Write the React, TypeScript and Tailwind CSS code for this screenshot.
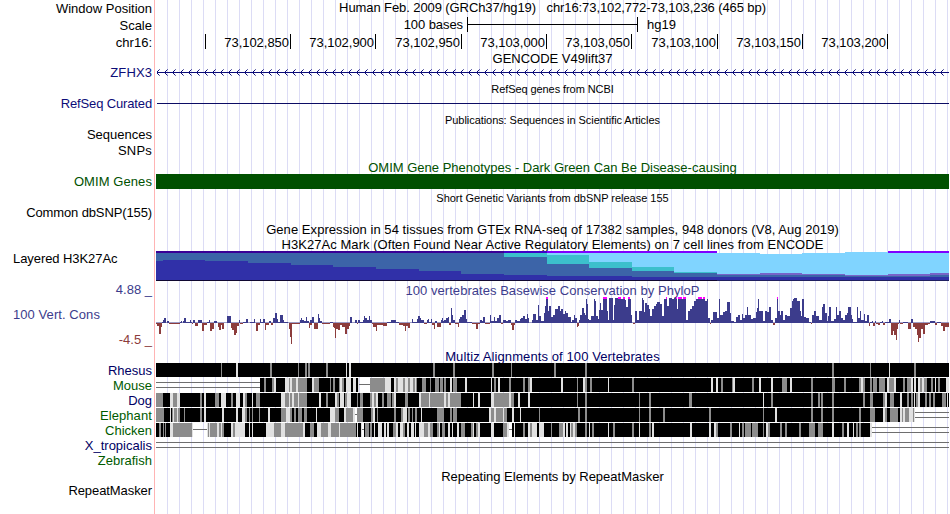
import React from 'react';

// The tracks start at x = 156 and are 793px wide (465 bases)
const TRACK_LEFT = 156;
const TRACK_WIDTH = 793;

interface Segment {
  origin: number;
  data: string;
}

interface Step {
  x: number;
  width: number;
  value: string;
}

// Each segment holds "start:value" steps in thirds of a pixel from its origin
const parseSteps = (segments: Segment[]): Step[] => {
  const points = segments.flatMap(({ origin, data }) =>
    data.split(' ').map((item) => {
      const [start, value] = item.split(':');
      return { x: Math.round(origin + Number(start) / 3), value };
    })
  );
  return points.map((p, i) => {
    const next = i + 1 < points.length ? points[i + 1].x : TRACK_LEFT + TRACK_WIDTH;
    return { x: p.x, width: Math.max(0, next - p.x), value: p.value };
  });
};

// Values of 26 are clipped at the top of the graph
const conservation: Segment[] = [
  {
    origin: 0,
    data: '468:-1 472:-3 476:-11 483:-4 487:1 490:3 493:5 498:0 502:2 508:-1 540:1 543:2 547:0 550:2 553:5 558:1 570:3 573:1 577:-1 580:3 584:0 585:-3 593:3 606:-8 613:-2 620:1 627:3 630:-8 636:-6 642:2 650:0 654:-4 658:-7 663:-2 667:-6 672:0 681:7 693:-5 697:-7 702:-12 709:-10 712:-3 717:3 721:-1 729:1 738:4 743:0 750:1 762:4 766:0 768:-8 773:-2 780:4 783:1 790:4 795:-7 798:-2 806:2 812:-2 819:5 824:10 831:4 835:1 840:8 849:3 853:1 863:0 867:-6 870:-14 873:-21 876:-1 900:3 904:5 907:3 912:2 917:6 921:2 926:-5 931:3 943:-6 953:9 956:3',
  },
  {
    origin: 310,
    data: '0:-2 6:6 12:-6 17:-2 24:9 27:5 31:2 36:-1 60:1 68:-4 73:-5 76:-15 79:-6 84:-7 89:-2 97:-4 105:-11 111:-6 116:-3 120:6 126:0 135:3 140:-1 145:3 149:1 160:3 163:7 166:5 171:3 178:7 181:3 186:-1 190:-4 197:-8 201:-2 220:-3 230:1 243:3 258:1 267:-2 280:-3 285:-8 288:-3 293:-5 301:0 305:4 310:1 322:4 325:7 329:5 333:3 342:-1 350:3 353:4 357:1 362:4 367:-2 372:-6 376:2 381:-4 392:3 396:5 399:2 403:3 407:5 413:6 418:-2 423:15 426:8 430:3 436:-1 443:-4 447:4 451:6 455:8 461:13 468:4 471:1 485:-1 498:-6 504:-1 510:3 515:2 518:6 526:-1 540:8 544:2 552:6 555:2 560:5 566:8 572:-1 580:3 588:2 594:3 602:-2 606:-7 612:-2 616:3 622:2 630:4 634:5 640:7 645:4 650:9 655:5 658:0 665:3 670:9 677:3 684:18 687:7 692:2 702:10 706:17 708:26 714:12 717:17 723:6 728:8 735:14 743:17 749:12 753:14 758:9 765:12 768:10 775:6 783:1 787:3 792:8 795:5 801:-4 805:-3 808:3 811:8 815:15 821:10 824:8 827:24 830:19 833:4 837:3 843:7 852:24 855:22 858:7 864:4 867:13 870:20 873:13 879:26 891:12 894:3 897:25 909:3 913:18 915:25 925:26 932:24 938:26 945:23 949:16 953:26',
  },
  {
    origin: 630,
    data: '0:24 3:8 6:0 9:-1 14:12 22:3 28:12 36:25 40:23 43:11 46:20 52:18 56:14 61:7 67:14 73:17 79:19 82:21 90:19 96:7 102:24 107:26 111:17 116:25 125:24 132:25 137:26 141:14 145:26 155:24 158:26 167:3 175:12 181:14 187:17 193:22 199:24 204:26 217:24 219:26 226:22 231:24 234:5 240:-1 243:3 250:11 260:5 267:24 270:8 278:11 285:12 291:21 300:10 303:2 312:1 318:6 325:8 330:3 335:9 340:5 346:8 352:16 355:8 362:4 368:5 378:11 381:15 384:24 387:12 399:2 405:12 411:11 416:16 422:3 429:-2 436:5 441:26 444:12 449:8 453:12 459:3 464:8 470:7 480:15 485:22 489:24 493:25 502:22 509:12 512:7 516:24 522:6 528:5 538:1 543:-1 547:8 552:12 558:7 567:3 576:16 579:19 585:10 590:2 594:7 598:16 602:2 612:4 618:16 622:8 628:12 634:5 638:3 645:8 650:10 654:16 662:8 667:4 670:1 680:16 684:5 690:12 694:3 702:9 705:2 711:8 716:-3 720:1 725:2 730:-3 735:2 738:-1 745:-2 750:1 757:2 760:-2 765:1 777:4 782:-5 784:-12 788:-8 792:-12 797:-17 801:-6 804:-1 807:3 811:-1 820:1 834:-6 843:4 849:-4 855:-6 860:-12 864:-19 868:-15 872:-6 879:-11 886:-2 895:-1 900:2 915:-2 921:1 932:-3 939:-8 945:-4',
  },
];

// K = identical, G / L = weaker match, S = gap, D = unalignable stretch
const alignments: { name: string; segments: Segment[] }[] = [
  {
    name: 'Rhesus',
    segments: [
      { origin: 100, data: '168:K 363:G 366:K 408:L 414:K 510:G 516:K 594:G 597:K 615:G 621:K 624:G' },
      { origin: 310, data: '0:K 48:G 54:K 108:L 111:K 117:L 123:K 369:G 375:K 429:G 435:K 546:G 552:K 603:G 606:K' },
      { origin: 520, data: '0:K 102:G 108:K 195:G 201:K' },
      { origin: 730, data: '0:K 306:G 312:K 420:G 423:K 477:L 480:K 552:G 558:K' },
    ],
  },
  {
    name: 'Mouse',
    segments: [
      { origin: 100, data: '168:D 480:K 492:G 498:K 516:G 522:L 528:K 555:L 567:G 570:L 576:G 588:L 594:G 621:K' },
      { origin: 310, data: '0:K 6:L 12:G 27:K 60:G 63:K 69:G 75:K 87:G 90:L 96:G 102:K 108:L 123:K 129:L 138:K 144:L 147:S 180:G 225:L 243:K 252:L 258:G 264:L 279:G 285:L 294:G 300:L 309:G 315:L 318:G 321:K 336:G 348:K 360:G 363:K 375:G 387:K 390:G 399:K 402:G 408:K 420:L 426:K 429:G 441:K 465:L 471:K 543:L 546:K 552:G 558:K 564:L 570:K 597:G 603:K 639:G 645:K 654:G' },
      { origin: 520, data: '0:K 9:G 15:K 24:G 30:L 36:K 123:L 129:K 171:G 174:K 189:L 195:G 201:K 210:G 216:K 264:L 267:K 336:G 342:K 573:L 579:K 588:L 594:K 603:G 609:K 639:L 645:K' },
      { origin: 730, data: '0:K 6:G 9:L 15:K 66:G 72:K 87:L 93:K 123:L 129:K 156:G 171:K 180:L 186:K 243:G 249:K 306:G 315:K 342:G 348:K 387:G 393:L 399:G 405:K 420:G 426:K 429:G 441:K 447:G 465:K 471:L 477:G 492:L 498:K 519:G 525:K 531:G 543:L 549:K 552:L 558:K 564:L 570:G 576:L 582:G 591:K 603:G 609:K 615:L 618:K 624:G 630:K 648:L' },
    ],
  },
  {
    name: 'Dog',
    segments: [
      { origin: 100, data: '168:G 189:K 210:L 219:G 231:L 240:K 300:G 306:K 312:L 318:K 345:G 357:K 363:L 378:K 393:G 399:K 408:L 420:K 429:L 435:G 441:K 456:L 459:K 468:G 480:K 543:L 555:G 567:L 570:G 576:L 582:G 594:L 597:G 621:K' },
      { origin: 310, data: '0:K 27:L 33:K 48:G 54:K 75:L 81:G 87:K 90:L 102:K 105:G 111:L 123:K 141:G 144:K 150:G 159:K 180:G 186:L 192:G 198:L 204:K 216:G 222:K 231:G 243:K 246:G 252:L 258:K 285:G 294:K 327:L 333:G 357:L 360:G 402:L 408:G 414:L 420:G 453:K 489:L 492:K 504:L 510:K 543:L 552:G 597:L 603:G 612:K 624:L 630:K 654:L' },
      { origin: 520, data: '0:K 24:L 30:K 171:G 174:K 195:G 201:K 357:G 360:K 387:G 393:K 507:G 516:K' },
      { origin: 730, data: '0:K 99:L 102:K 123:G 129:K 243:G 249:K 264:G 270:K 273:G 279:K 306:G 312:K 399:G 405:K 420:G 429:K 459:G 465:L 471:K 480:G 492:K 510:L 516:K 531:G 537:K 543:G 549:K 552:L 555:K 558:G 564:L 570:K 585:G 591:K 597:G 603:K 609:G 615:K 636:G 648:K 651:L 654:K' },
    ],
  },
  {
    name: 'Elephant',
    segments: [
      { origin: 100, data: '168:G 192:K 210:L 213:K 216:G 219:L 222:G 231:L 234:G 240:K 252:G 255:K 300:G 306:K 312:L 318:K 366:L 372:K 408:L 414:K 426:L 435:G 441:K 447:G 450:K 456:G 459:K 477:G 480:K 504:L 510:K 543:G 558:L 570:G 576:K 582:G 588:K 594:G 606:K 612:G 621:K' },
      { origin: 310, data: '0:K 18:L 21:K 60:L 75:G 87:K 102:L 108:G 129:L 135:S 141:G 159:K 183:G 189:L 195:K 201:G 204:K 252:G 258:K 273:G 279:L 291:K 294:G 300:K 306:G 309:K 315:G 321:K 333:L 336:K 381:G 402:K 420:G 426:K 429:G 441:K 537:L 543:G 552:L 558:G 579:L 582:G 591:K 606:L 612:K 630:L 633:K' },
      { origin: 520, data: '0:L 3:K 57:G 60:K 174:G 180:K 195:G 201:K 357:G 360:K 387:G 393:K 429:G 435:K 567:G 573:K' },
      { origin: 730, data: '0:K 99:G 102:K 135:L 141:K 243:G 249:K 273:G 279:K 306:G 312:K 387:G 393:K 420:G 435:K 459:L 465:G 471:K 480:G 504:K 510:L 516:G 519:L 525:G 537:L 549:G 552:L 555:D' },
    ],
  },
  {
    name: 'Chicken',
    segments: [
      { origin: 100, data: '168:K 177:G 183:K 189:G 192:K 195:G 198:K 210:L 219:G 276:L 279:S 321:L 324:G 327:L 330:G 351:L 357:G 363:L 366:G 372:K 393:L 399:G 405:L 435:K 447:L 450:K 456:L 459:K 498:L 522:G 543:L 555:G 609:L 615:K 642:G 651:L' },
      { origin: 310, data: '0:G 12:K 21:L 33:G 54:L 63:G 87:L 90:G 138:K 141:L 144:K 153:L 156:S 162:K 165:G 177:K 180:G 186:K 192:L 195:K 204:L 216:K 222:L 228:K 231:L 237:K 249:G 258:L 264:K 270:L 279:G 285:K 291:L 297:K 303:L 312:K 315:L 318:K 327:L 342:G 354:L 360:G 369:K 381:G 387:L 390:K 396:G 405:K 414:L 420:K 426:L 429:K 441:L 447:K 453:G 465:K 483:G 489:L 492:K 498:G 504:L 510:K 543:L 552:K 579:G 591:L 597:S 606:K 612:L 615:K 639:G 645:K 654:L' },
      { origin: 520, data: '0:K 9:G 15:K 24:L 30:G 36:L 51:K 57:L 72:K 93:G 96:K 117:G 129:L 135:K 138:L 144:K 150:L 153:G 159:L 165:G 171:K 195:G 201:K 207:L 210:K 216:G 222:K 264:L 267:K 279:G 285:K 336:G 342:K 357:L 360:K 387:G 393:K 396:L 402:K 510:L 516:K 567:L 573:K 582:L 588:G 594:K 630:G 636:K 657:L' },
      { origin: 730, data: '0:G 6:K 27:L 30:K 36:G 42:K 45:G 63:K 66:G 84:K 99:G 102:K 108:L 114:G 120:K 150:G 156:K 165:G 171:K 207:G 213:K 237:G 255:K 264:G 279:K 306:L 312:K 336:G 342:K 351:L 357:K 369:L 372:K 378:G 384:K 387:G 393:K 420:L 426:D' },
    ],
  },
  { name: 'X_tropicalis', segments: [{ origin: 156, data: '0:D' }] },
];

const shades: Record<string, string> = {
  K: 'fill-black',
  G: 'fill-[#8c8c8c]',
  L: 'fill-[#e1e1e1]',
};

// [x, width, light top, teal top, purple top, blue top, dark top]
const histone = [
  [156, 7, 253, 253, 253, 253, 261],
  [163, 42, 253, 253, 253, 253, 260],
  [205, 43, 253, 253, 253, 253, 261],
  [248, 43, 253, 253, 253, 253, 263],
  [291, 42, 253, 253, 253, 253, 265],
  [333, 43, 253, 253, 253, 253, 267],
  [376, 43, 253, 253, 253, 253, 269],
  [419, 42, 253, 253, 253, 253, 271],
  [461, 43, 253, 253, 253, 253, 274],
  [504, 43, 253, 253, 257, 257, 275],
  [547, 42, 253, 255, 264, 264, 276],
  [589, 43, 253, 262, 268, 268, 276],
  [632, 42, 253, 267, 271, 271, 277],
  [674, 43, 253, 272, 273, 273, 277],
  [717, 43, 253, 274, 274, 275, 277],
  [760, 42, 254, 273, 273, 275, 277],
  [802, 43, 253, 274, 274, 275, 277],
  [845, 43, 252, 275, 275, 276, 277],
  [888, 42, 253, 274, 274, 276, 277],
  [930, 19, 253, 273, 273, 275, 277],
];

const ruler = [
  { label: '', width: 'w-[50px]' },
  { label: '73,102,850', width: 'w-[85px]' },
  { label: '73,102,900', width: 'w-[85px]' },
  { label: '73,102,950', width: 'w-[86px]' },
  { label: '73,103,000', width: 'w-[85px]' },
  { label: '73,103,050', width: 'w-[85px]' },
  { label: '73,103,100', width: 'w-[86px]' },
  { label: '73,103,150', width: 'w-[85px]' },
  { label: '73,103,200', width: 'w-[85px]' },
];

const labels = [
  { text: 'Window Position', style: 'h-[17px] text-black' },
  { text: 'Scale', style: 'h-[17px] text-black' },
  { text: 'chr16:', style: 'h-[17px] text-black' },
  { text: 'ZFHX3', style: 'mt-[14px] h-[15px] tracking-[0.1px] text-[#0c0c78]' },
  { text: 'RefSeq Curated', style: 'mt-[16px] h-[15px] tracking-[-0.14px] text-[#0c0c78]' },
  { text: 'Sequences', style: 'mt-[16px] h-[15px] text-black' },
  { text: 'SNPs', style: 'mt-px h-[15px] tracking-[0.2px] text-black' },
  { text: 'OMIM Genes', style: 'mt-[16px] h-[15px] tracking-[0.08px] text-[#005000]' },
  { text: 'Common dbSNP(155)', style: 'mt-[16px] h-[15px] tracking-[-0.12px] text-black' },
  { text: 'Layered H3K27Ac', style: 'mt-[31px] h-[15px] w-[139px] self-end tracking-[-0.07px] text-black' },
  { text: '4.88 _', style: 'mt-[16px] h-[15px] text-[#3c3c8c]' },
  { text: '100 Vert. Cons', style: 'mt-[10px] h-[15px] w-[139px] self-end tracking-[0.07px] text-[#3c3c8c]' },
  { text: '-4.5 _', style: 'mt-[10px] h-[15px] text-[#8c3c3c]' },
  { text: 'Rhesus', style: 'mt-[16px] h-[15px] text-[#000064]' },
  { text: 'Mouse', style: 'h-[15px] text-[#005a00]' },
  { text: 'Dog', style: 'h-[15px] text-[#000064]' },
  { text: 'Elephant', style: 'h-[15px] tracking-[0.1px] text-[#005a00]' },
  { text: 'Chicken', style: 'h-[15px] text-[#005a00]' },
  { text: 'X_tropicalis', style: 'h-[15px] text-[#000064]' },
  { text: 'Zebrafish', style: 'h-[15px] text-[#005a00]' },
  { text: 'RepeatMasker', style: 'mt-[15px] h-[15px] tracking-[-0.08px] text-black' },
];

const Caption: React.FC<{ className: string; children: React.ReactNode }> = ({ className, children }) => (
  <div className={`flex items-center justify-center whitespace-pre ${className}`}>{children}</div>
);

const GeneArrows: React.FC = () => {
  const tips = Array.from({ length: 99 }, (_, i) => i * 8);
  return (
    <svg width={793} height={15} shapeRendering="crispEdges" className="block fill-[#0c0c78]">
      <rect x={1} y={7} width={792} height={1} />
      {tips.map((x) => (
        <g key={x}>
          {[1, 2, 3].map((d) => (
            <g key={d} className={d === 3 ? 'opacity-60' : ''}>
              <rect x={x + d} y={7 - d} width={1} height={1} />
              <rect x={x + d} y={7 + d} width={1} height={1} />
            </g>
          ))}
        </g>
      ))}
    </svg>
  );
};

const HistoneGraph: React.FC = () => (
  <svg width={793} height={30} viewBox="156 251 793 30" shapeRendering="crispEdges" className="block">
    <rect x={156} y={251} width={348} height={2} className="fill-[#3a0096]" />
    <rect x={504} y={251} width={43} height={2} className="fill-[#4000c8]" />
    <rect x={547} y={251} width={170} height={2} className="fill-[#7f00ff]" />
    <rect x={888} y={251} width={61} height={2} className="fill-[#7f00ff]" />
    {histone.map(([x, w, light, teal, purple, blue, dark]) => (
      <g key={x}>
        <rect x={x} y={light} width={w} height={280 - light} className="fill-[#80d4ff]" />
        <rect x={x} y={teal} width={w} height={280 - teal} className={x < 717 ? 'fill-[#3cc0cc]' : 'fill-[#7864c8]'} />
        <rect x={x} y={purple} width={w} height={280 - purple} className="fill-[#7864c8]" />
        <rect x={x} y={blue} width={w} height={280 - blue} className="fill-[#3c64a8]" />
        <rect x={x} y={dark} width={w} height={280 - dark} className="fill-[#3030a8]" />
      </g>
    ))}
    <rect x={156} y={280} width={561} height={1} className="fill-[#100830]" />
    <rect x={717} y={280} width={232} height={1} className="fill-[#202060]" />
  </svg>
);

const ConservationGraph: React.FC = () => (
  <svg width={793} height={50} viewBox="156 297 793 50" shapeRendering="crispEdges" className="block">
    {parseSteps(conservation).map(({ x, width, value }) => {
      const score = Number(value);
      if (score < 0) {
        return <rect key={x} x={x} y={323} width={width} height={-score} className="fill-[#8c3c3c]" />;
      }
      return (
        <g key={x}>
          <rect x={x} y={323 - score} width={width} height={score} className="fill-[#3c3c8c]" />
          {score === 26 && <rect x={x} y={297} width={width} height={2} className="fill-[#ff00ff]" />}
        </g>
      );
    })}
    <rect x={156} y={322} width={793} height={1} className="fill-[#3c3c8c]/50" />
  </svg>
);

const AlignmentRow: React.FC<{ segments: Segment[] }> = ({ segments }) => (
  <svg width={793} height={15} viewBox="156 0 793 15" shapeRendering="crispEdges" className="block">
    {parseSteps(segments).map(({ x, width, value }) => {
      if (value === 'D') {
        return (
          <g key={x} className="fill-[#6e6e6e]">
            <rect x={x} y={4} width={width} height={1} />
            <rect x={x} y={9} width={width} height={1} />
          </g>
        );
      }
      if (value === 'S') {
        return <rect key={x} x={x} y={6} width={width} height={1} className="fill-[#6e6e6e]" />;
      }
      return <rect key={x} x={x} y={0} width={width} height={14} className={shades[value]} />;
    })}
  </svg>
);

const App: React.FC = () => {
  return (
    <div className="flex h-[514px] w-[950px] overflow-hidden bg-white font-['Liberation_Sans',Arial,sans-serif] text-[13px] leading-[15px] text-black">
      {/* Track labels */}
      <div className="flex w-[155px] shrink-0 flex-col border-r border-[#ffb4b4] pr-[2px]">
        {labels.map(({ text, style }) => (
          <div
            key={text}
            className={`flex shrink-0 items-center whitespace-pre ${style.includes('self-end') ? '' : 'justify-end'} ${style}`}
          >
            {text}
          </div>
        ))}
      </div>

      {/* Tracks over the vertical guidelines */}
      <div className="ml-px w-[793px] shrink-0 bg-[linear-gradient(to_right,transparent_11px,#dcdcf5_11px)] bg-[length:12px_100%]">
        <Caption className="h-[15px] tracking-[-0.09px]">
          Human Feb. 2009 (GRCh37/hg19)   chr16:73,102,772-73,103,236 (465 bp)
        </Caption>

        {/* Scale bar */}
        <div className="mt-px flex h-[17px] items-center">
          <span className="w-[307px] text-right tracking-[-0.08px]">100 bases</span>
          <div className="ml-[4px] flex h-[15px] w-[171px] items-center border-x border-black">
            <div className="h-px w-full bg-black" />
          </div>
          <span className="ml-[9px]">hg19</span>
        </div>

        {/* Position ruler */}
        <div className="mt-px flex h-[15px]">
          {ruler.map(({ label, width }) => (
            <div
              key={width + label}
              className={`flex items-center justify-end border-r border-black pt-[2px] pr-px tracking-[-0.03px] ${width}`}
            >
              {label}
            </div>
          ))}
        </div>

        <Caption className="mt-[2px] h-[14px]">GENCODE V49lift37</Caption>
        <GeneArrows />

        <Caption className="h-[18px] text-[11px] tracking-[-0.08px]">RefSeq genes from NCBI</Caption>
        <div className="mt-[5px] ml-px h-px bg-[#0c0c64]" />

        <Caption className="mt-[9px] h-[15px] text-[11px] tracking-[-0.06px]">
          Publications: Sequences in Scientific Articles
        </Caption>

        <Caption className="mt-[32px] h-[15px] text-[#005000]">
          OMIM Gene Phenotypes - Dark Green Can Be Disease-causing
        </Caption>
        <div className="-mt-px h-[15px] bg-[#005000]" />

        <Caption className="mt-[2px] h-[15px] text-[11px] tracking-[-0.02px]">
          Short Genetic Variants from dbSNP release 155
        </Caption>

        <Caption className="mt-[16px] h-[15px] tracking-[0.06px]">
          Gene Expression in 54 tissues from GTEx RNA-seq of 17382 samples, 948 donors (V8, Aug 2019)
        </Caption>
        <Caption className="h-[14px] tracking-[0.05px]">
          H3K27Ac Mark (Often Found Near Active Regulatory Elements) on 7 cell lines from ENCODE
        </Caption>
        <HistoneGraph />

        <Caption className="mt-[2px] h-[14px] tracking-[0.04px] text-[#3c3c8c]">
          100 vertebrates Basewise Conservation by PhyloP
        </Caption>
        <ConservationGraph />

        <Caption className="mt-[2px] h-[14px] tracking-[0.1px] text-[#000064]">
          Multiz Alignments of 100 Vertebrates
        </Caption>
        {alignments.map(({ name, segments }) => (
          <AlignmentRow key={name} segments={segments} />
        ))}

        <Caption className="mt-[16px] h-[15px]">Repeating Elements by RepeatMasker</Caption>
      </div>
    </div>
  );
};

export default App;
